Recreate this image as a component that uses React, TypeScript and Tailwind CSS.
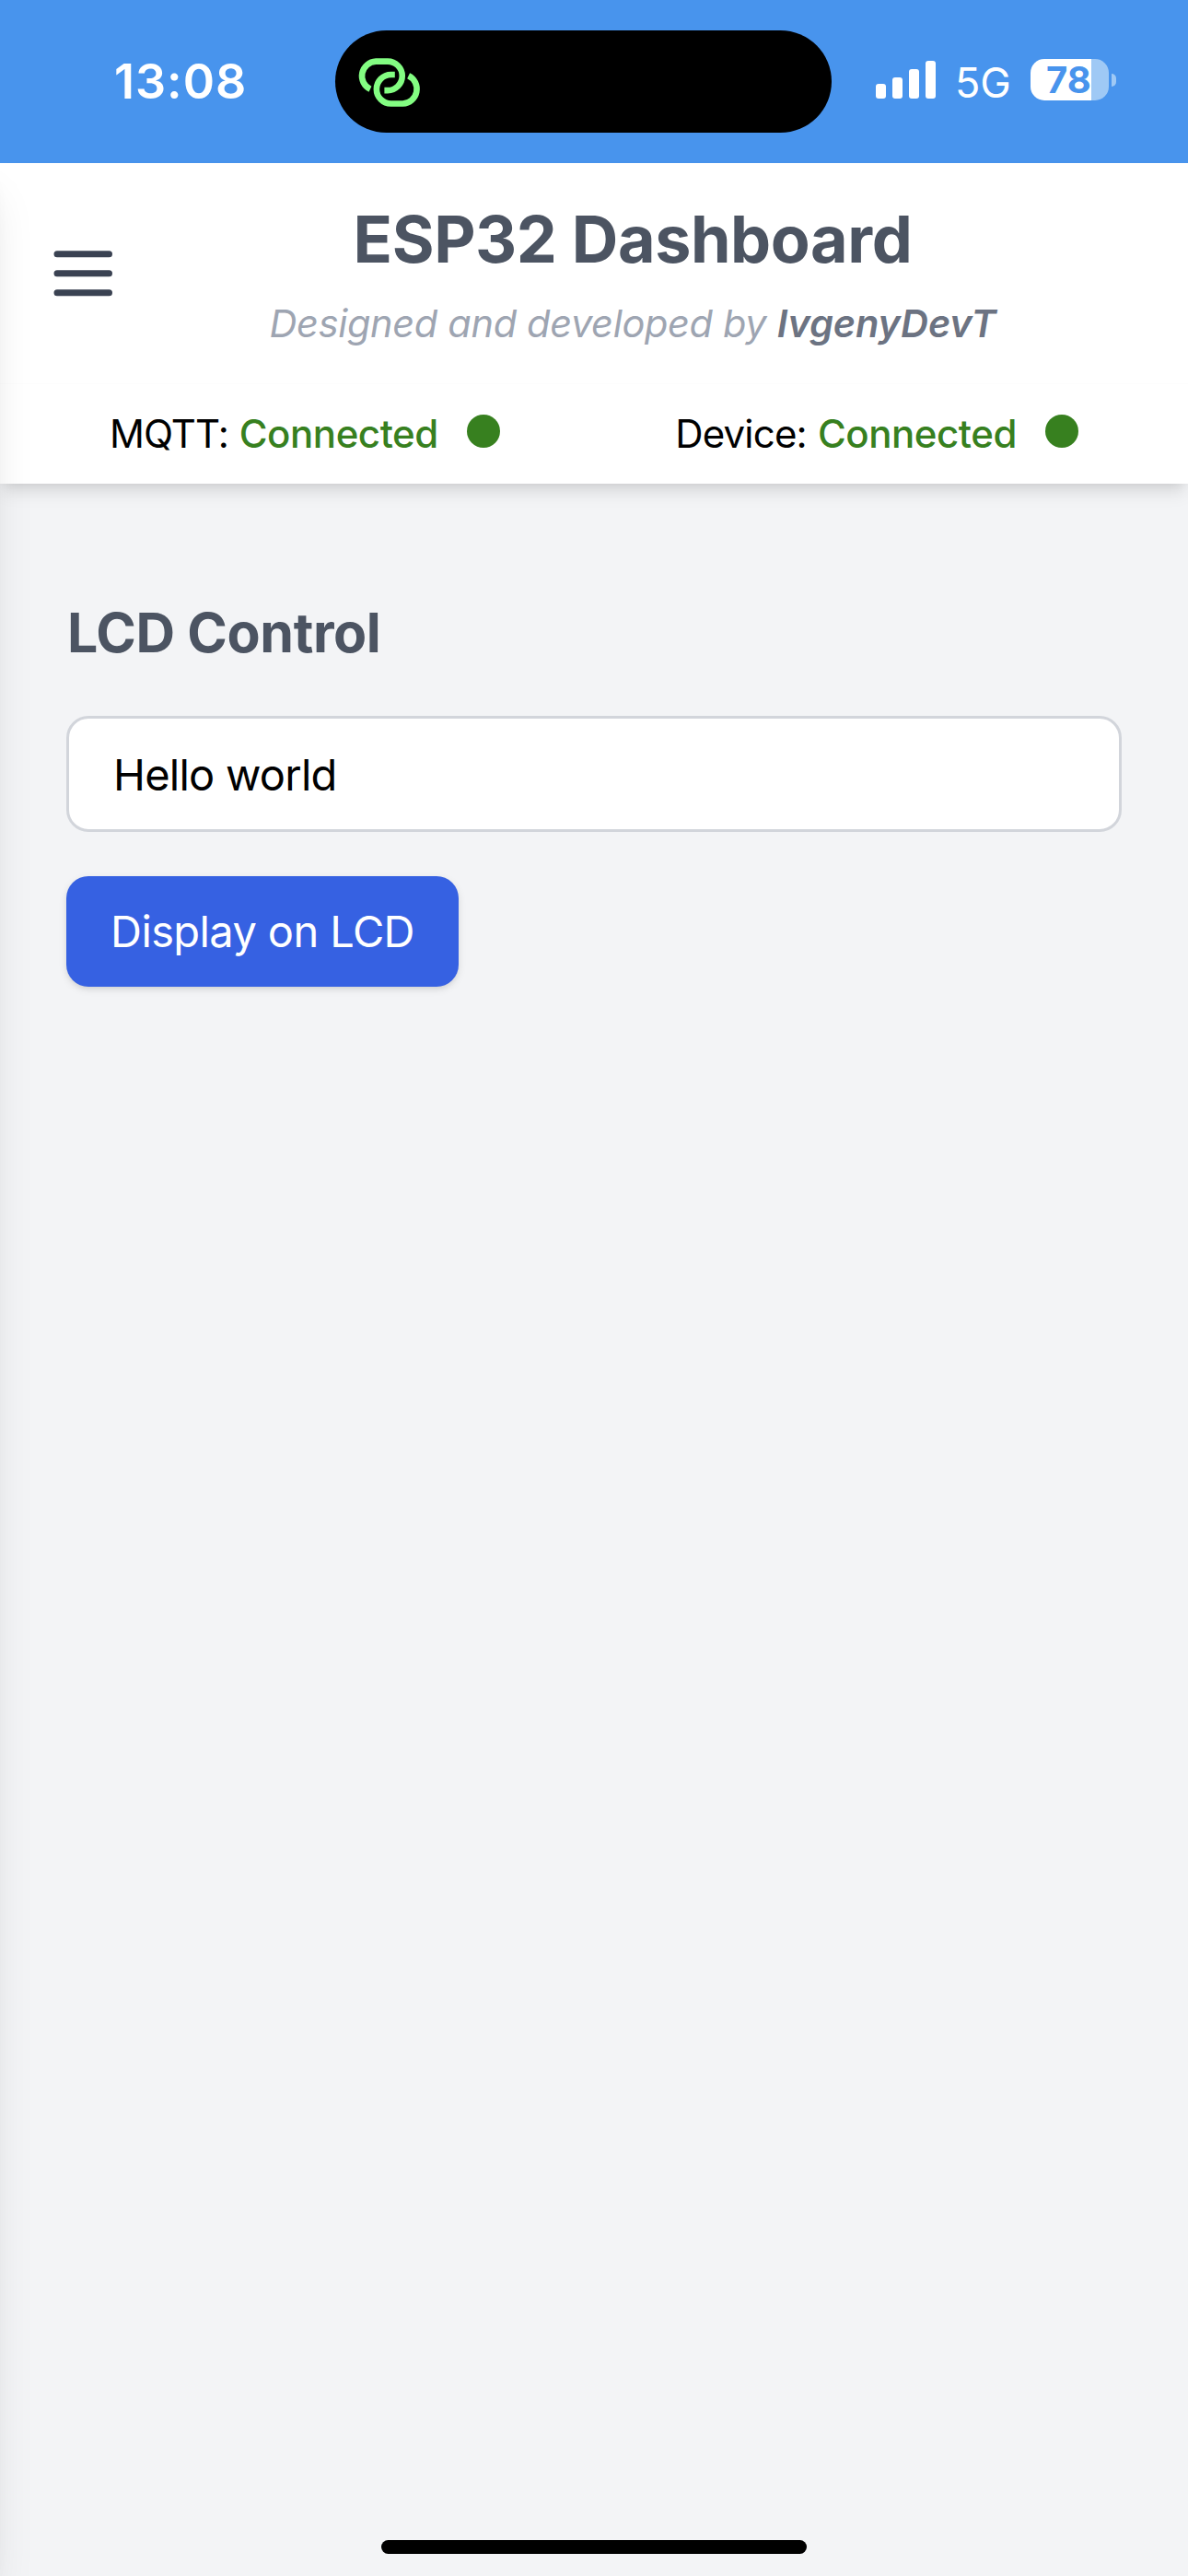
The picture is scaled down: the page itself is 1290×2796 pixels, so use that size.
function LinkIcon() {
  return (
    <svg className="h-[60px] w-[74px]" viewBox="386 58 74 60" fill="none" stroke="#83fd82" strokeWidth="6.6">
      <path d="M402 95.8A15.9 15.9 0 0 1 408.2 65.6H421A15.75 15.75 0 0 1 421 97.1H417.4" />
      <path d="M443.6 81.3A15.9 15.9 0 0 1 437.4 111.5H424.6A15.75 15.75 0 0 1 424.6 80H428.8" />
    </svg>
  );
}

function StatusBar() {
  return (
    <div className="flex h-[177px] items-start bg-[#4894ed]">
      <div className="ml-[124px] mt-[61px] w-[240px] whitespace-nowrap text-[52px] font-semibold leading-[56px] tracking-[1px] text-white">13:08</div>
      <div className="mt-[33px] flex h-[111px] w-[539px] items-center rounded-full bg-black pl-[22px]">
        <LinkIcon />
      </div>
      <div className="ml-[48px] mt-[66px] flex h-[41px] w-[65px] items-end gap-[7px]">
        <div className="h-[16px] w-[11px] rounded-[3px] bg-white" />
        <div className="h-[23px] w-[11px] rounded-[3px] bg-white" />
        <div className="h-[32px] w-[11px] rounded-[3px] bg-white" />
        <div className="h-[41px] w-[11px] rounded-[3px] bg-white" />
      </div>
      <div className="ml-[21px] mt-[65px] w-[82px] whitespace-nowrap text-[45px] leading-[49px] text-white">5G</div>
      <div className="mt-[64px] flex h-[45px] items-center gap-[3px]">
        <div className="flex h-[45px] w-[85px] items-center rounded-[15px] bg-[linear-gradient(to_right,#ffffff_66px,#9fc9f5_66px)] pl-[17px]">
          <span className="text-[40px] font-bold leading-[45px] text-[#4894ed]">78</span>
        </div>
        <div className="h-[14px] w-[5px] rounded-r-full bg-[#9fc9f5]" />
      </div>
    </div>
  );
}

function Connection({ label, labelClass }: { label: string; labelClass: string }) {
  return (
    <div className="flex items-center whitespace-nowrap text-[42px] leading-[50px]">
      <span className={labelClass}>{label}:</span>
      <span className="ml-[12px] font-medium tracking-[-0.45px] text-[#37801f]">Connected</span>
      <span className="mb-[6px] ml-[31px] size-[36px] rounded-full bg-[#37801f]" />
    </div>
  );
}

export default function App() {
  return (
    <div className="relative flex h-[2796px] w-[1290px] flex-col overflow-hidden bg-[#f3f4f6] font-['Inter','Liberation_Sans',sans-serif]">
      <StatusBar />
      <header className="h-[348px] bg-white shadow-[0_12px_18px_-3px_rgba(0,0,0,0.1),0_6px_12px_-6px_rgba(0,0,0,0.1)]">
        <div className="flex h-[240px] border-b border-[#fcfcfc] pr-[48px]">
          <svg className="ml-[48px] mt-[78px] h-[84px] w-[84px] shrink-0" viewBox="0 0 84 84" stroke="#3a4252" strokeWidth="7" strokeLinecap="round">
            <path d="M14 20.8H70.5M14 41.8H70.5M14 62.8H70.5" />
          </svg>
          <div className="flex flex-1 flex-col items-center whitespace-nowrap">
            <h1 className="mt-[42px] text-[70px] font-bold leading-[81px] tracking-[-0.4px] text-[#4c5462]">ESP32 Dashboard</h1>
            <p className="mt-[21px] text-[41.5px] italic leading-[60px] tracking-[-0.33px] text-[#9ea5b2]">
              Designed and developed by <span className="font-semibold tracking-[-0.1px] text-[#6c7382]">IvgenyDevT</span>
            </p>
          </div>
        </div>
        <div className="flex justify-between px-[119px] pt-[29px]">
          <Connection label="MQTT" labelClass="tracking-[-1px] text-black" />
          <Connection label="Device" labelClass="tracking-[-0.8px] text-black" />
        </div>
      </header>
      <main className="flex flex-1 flex-col items-start px-[72px] pt-[120px]">
        <h2 className="ml-[1px] text-[59px] font-bold leading-[84px] tracking-[-0.4px] text-[#4c5462]">LCD Control</h2>
        <input
          type="text"
          defaultValue="Hello world"
          className="mt-[48px] h-[126px] w-full rounded-[24px] border-[3px] border-[#d2d5db] bg-white px-[48px] text-[47px] tracking-[-0.75px] text-black outline-none"
        />
        <button className="mt-[48px] h-[120px] w-[426px] whitespace-nowrap rounded-[24px] bg-[#3661e2] pt-[1px] text-[47px] tracking-[-0.6px] text-white shadow-[0_3px_9px_rgba(0,0,0,0.1),0_3px_6px_-3px_rgba(0,0,0,0.1)]">
          Display on LCD
        </button>
      </main>
      {/* iOS home indicator */}
      <div className="absolute bottom-[24px] left-[414px] h-[15px] w-[462px] rounded-full bg-black" />
      {/* Closed side drawer; only its shadow reaches the page */}
      <div className="absolute bottom-0 left-[-300px] top-[177px] w-[300px] shadow-[0_30px_45px_-9px_rgba(0,0,0,0.1),0_12px_18px_-12px_rgba(0,0,0,0.1)]" />
    </div>
  );
}
